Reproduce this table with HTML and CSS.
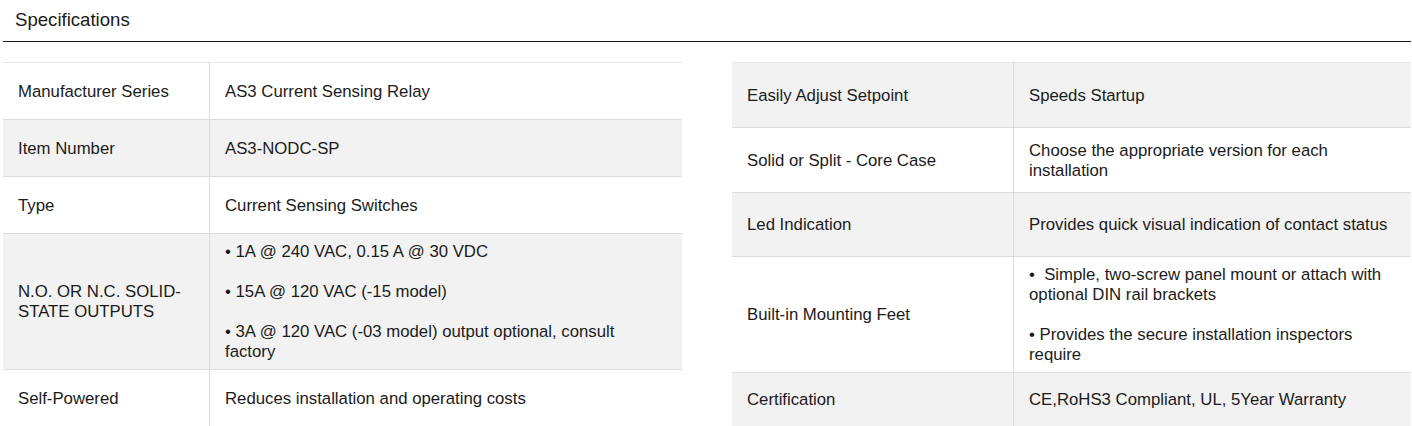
FILE: index.html
```html
<!DOCTYPE html>
<html lang="en">
<head>
<meta charset="utf-8">
<title>Specifications</title>
<link rel="stylesheet" href="styles.css">
</head>
<body>
<div class="page">
  <h2 class="title">Specifications</h2>
  <div class="columns">
    <table class="spec spec-left">
      <tr><td class="k">Manufacturer Series</td><td>AS3 Current Sensing Relay</td></tr>
      <tr class="alt"><td class="k">Item Number</td><td>AS3-NODC-SP</td></tr>
      <tr><td class="k">Type</td><td>Current Sensing Switches</td></tr>
      <tr class="alt"><td class="k">N.O. OR N.C. SOLID-STATE OUTPUTS</td><td>• 1A @ 240 VAC, 0.15 A @ 30 VDC<br><br>• 15A @ 120 VAC (-15 model)<br><br>• 3A @ 120 VAC (-03 model) output optional, consult factory</td></tr>
      <tr><td class="k">Self-Powered</td><td>Reduces installation and operating costs</td></tr>
    </table>
    <table class="spec spec-right">
      <tr class="alt"><td class="k">Easily Adjust Setpoint</td><td>Speeds Startup</td></tr>
      <tr><td class="k">Solid or Split - Core Case</td><td>Choose the appropriate version for each installation</td></tr>
      <tr class="alt short"><td class="k">Led Indication</td><td>Provides quick visual indication of contact status</td></tr>
      <tr><td class="k">Built-in Mounting Feet</td><td>•&nbsp; Simple, two-screw panel mount or attach with optional DIN rail brackets<br><br>• Provides the secure installation inspectors require</td></tr>
      <tr class="alt last"><td class="k">Certification</td><td>CE,RoHS3 Compliant, UL, 5Year Warranty</td></tr>
    </table>
  </div>
</div>
</body>
</html>
```
FILE: styles.css
```css
html, body {
  margin: 0;
  padding: 0;
  background: #ffffff;
}
body {
  font-family: "Liberation Sans", Arial, sans-serif;
  color: #1b1b1b;
}
.page {
  padding: 0 1px 0 3px;
}
.title {
  margin: 0;
  height: 41px;
  line-height: 39px;
  padding: 0 12px;
  font-size: 18.6px;
  font-weight: normal;
  color: #1a1a1a;
  border-bottom: 1px solid #1a1a1a;
}
.columns {
  display: flex;
  gap: 50px;
  margin-top: 20px;
  align-items: flex-start;
}
.spec {
  flex: 1 1 0;
  width: 679px;
  border-collapse: collapse;
  font-size: 16.75px;
  line-height: 20px;
  border-top: 1px solid #e6e6e6;
}
.spec tr {
  border-bottom: 1px solid #dcdcdc;
}
.spec tr.alt {
  background: #f2f2f2;
}
.spec td {
  padding: 8px 15px 7px;
  height: 41px;
  vertical-align: middle;
  text-align: left;
}
.spec td.k {
  border-right: 1px solid #dcdcdc;
}
.spec-left td.k {
  width: 176px;
}
.spec-right td {
  height: 49px;
}
.spec-right tr.short td {
  height: 48px;
}
.spec-right tr.last td {
  height: 38px;
}
.spec-right td.k {
  width: 251px;
}
```
